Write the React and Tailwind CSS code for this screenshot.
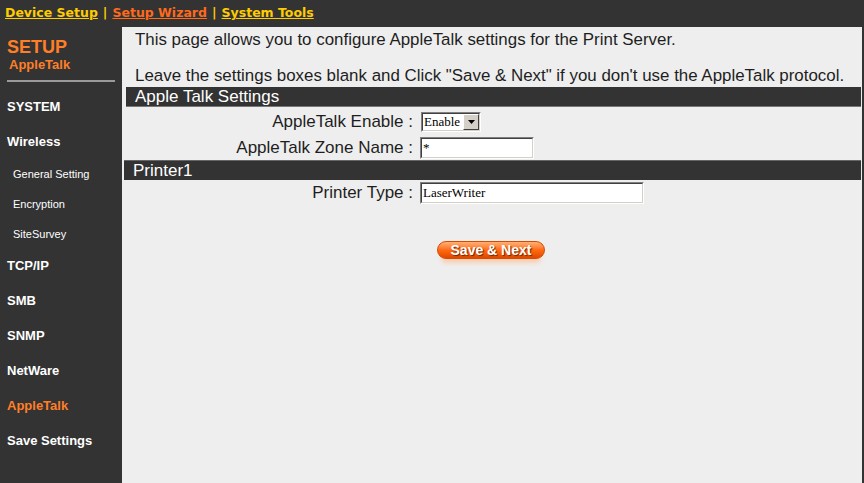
import React from "react";

const sideMain = "h-[35px] flex items-center pl-[7px] text-[13px] font-bold text-white";
const sideSub = "h-[30px] flex items-center pl-[13px] text-[11px] text-white";

function Inset({ className, children }) {
  return (
    <div className={"border border-t-[#808080] border-l-[#808080] border-b-[#ffffff] border-r-[#ffffff] " + className}>
      <div className="h-full w-full border border-t-[#404040] border-l-[#404040] border-b-[#d4d0c8] border-r-[#d4d0c8] bg-white flex items-center">
        {children}
      </div>
    </div>
  );
}

export default function App() {
  return (
    <div className="w-[864px] h-[483px] bg-[#333333] flex flex-col overflow-hidden" style={{ fontFamily: '"Liberation Sans", Arial, sans-serif' }}>
      <div className="h-[27px] flex items-center pl-[5px] text-[12.5px] font-bold" style={{ fontFamily: '"DejaVu Sans", Verdana, sans-serif' }}>
        <span className="text-[#ffcc00] underline">Device Setup</span>
        <span className="text-[#ffcc00] mx-[5px]">|</span>
        <span className="text-[#ff6a1a] underline">Setup Wizard</span>
        <span className="text-[#ffcc00] mx-[5px]">|</span>
        <span className="text-[#ffcc00] underline">System Tools</span>
      </div>
      <div className="flex flex-1">
        <div className="w-[122px] flex flex-col">
          <div className="pl-[7px] pt-[10px]">
            <div className="text-[18px] leading-[20px] font-bold text-[#ff7f27]">SETUP</div>
            <div className="text-[13px] leading-[15px] font-bold text-[#ff7f27] pl-[2px]">AppleTalk</div>
          </div>
          <div className="mx-[7px] mt-[8px] h-[2px] w-[108px] bg-[#9a9a9a]"></div>
          <div className="mt-[7px] flex flex-col">
            <div className={sideMain}>SYSTEM</div>
            <div className={sideMain}>Wireless</div>
            <div className={sideSub}>General Setting</div>
            <div className={sideSub}>Encryption</div>
            <div className={sideSub}>SiteSurvey</div>
            <div className="h-[34px] flex items-center pl-[7px] text-[13px] font-bold text-white">TCP/IP</div>
            <div className={sideMain}>SMB</div>
            <div className={sideMain}>SNMP</div>
            <div className={sideMain}>NetWare</div>
            <div className="h-[35px] flex items-center pl-[7px] text-[13px] font-bold text-[#ff7f27]">AppleTalk</div>
            <div className={sideMain}>Save Settings</div>
          </div>
        </div>
        <div className="flex-1 bg-[#eeeeee] mr-[2px] flex flex-col text-[#1e1e1e]">
          <div className="pl-[13px] pt-[4px] text-[16.9px] leading-[18px]">
            This page allows you to configure AppleTalk settings for the Print Server.
          </div>
          <div className="pl-[13px] mt-[18px] text-[16.9px] leading-[18px]">
            Leave the settings boxes blank and Click "Save &amp; Next" if you don't use the AppleTalk protocol.
          </div>
          <div className="ml-[4px] mr-[1px] mt-[2px] h-[20px] bg-[#333333] border-b border-[#777777] flex items-center pl-[9px] text-white text-[17px]">
            Apple Talk Settings
          </div>
          <div className="flex items-center h-[26px] mt-[2px]">
            <div className="w-[291px] text-right text-[17px]">AppleTalk Enable :</div>
            <div className="ml-[8px] w-[60px] h-[20px] border border-t-[#808080] border-l-[#808080] border-b-[#ffffff] border-r-[#ffffff]">
              <div className="h-full w-full border border-t-[#404040] border-l-[#404040] border-b-[#d4d0c8] border-r-[#d4d0c8] bg-white flex items-center">
                <span className="flex-1 pl-[1px] text-[13px] text-black" style={{ fontFamily: '"Liberation Serif", "Times New Roman", serif' }}>Enable</span>
                <div className="w-[16px] h-[16px] bg-[#d4d0c8] border border-t-[#ffffff] border-l-[#ffffff] border-b-[#404040] border-r-[#404040] flex items-center justify-center">
                  <svg width="7" height="4" viewBox="0 0 7 4"><path d="M0 0H7L3.5 4Z" fill="#000" /></svg>
                </div>
              </div>
            </div>
          </div>
          <div className="flex items-center h-[25px]">
            <div className="w-[291px] text-right text-[17px]">AppleTalk Zone Name :</div>
            <Inset className="ml-[7px] w-[114px] h-[22px]">
              <span className="pl-[1px] text-[13px] text-black" style={{ fontFamily: '"Liberation Serif", serif' }}>*</span>
            </Inset>
          </div>
          <div className="ml-[2px] mr-[1px] h-[20px] bg-[#333333] border-t border-[#666666] flex items-center pl-[9px] text-white text-[17px]">
            Printer1
          </div>
          <div className="flex items-center h-[26px]">
            <div className="w-[291px] text-right text-[17px]">Printer Type :</div>
            <Inset className="ml-[7px] w-[224px] h-[22px]">
              <span className="pl-[1px] text-[13px] text-black" style={{ fontFamily: '"Liberation Serif", serif' }}>LaserWriter</span>
            </Inset>
          </div>
          <div className="flex mt-[35px] pl-[315px]">
            <div className="relative">
              <div className="absolute left-[4px] right-[4px] top-[12px] h-[10px] rounded-full bg-[#ffb88a] opacity-60 blur-[2px]"></div>
              <div className="relative w-[108px] h-[18px] rounded-full border border-[#d84a00] bg-gradient-to-b from-[#ffb070] via-[#ff6a10] to-[#e04800] flex items-center justify-center text-white text-[14px] font-bold [text-shadow:1px_1px_1px_#6a2400]">
                Save &amp; Next
              </div>
            </div>
          </div>
        </div>
      </div>
    </div>
  );
}
